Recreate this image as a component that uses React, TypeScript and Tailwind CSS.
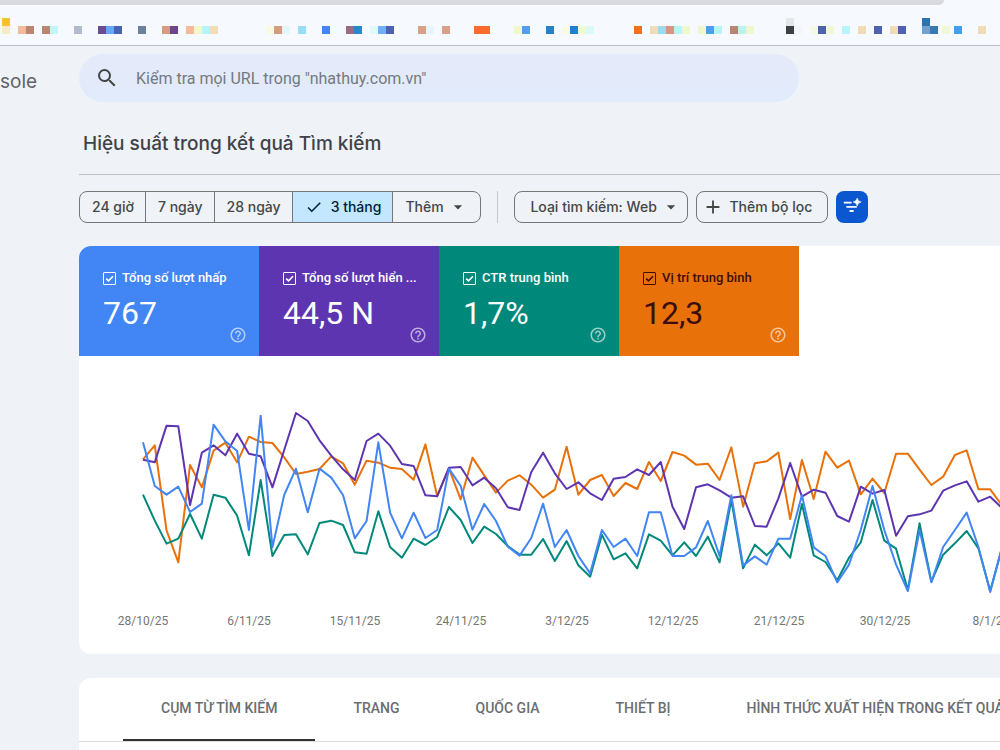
import { useState } from 'react';
import { MdAdd, MdArrowDropDown, MdCheck, MdHelpOutline, MdSearch } from 'react-icons/md';

// [x, y, colour] of every 8px block on the bookmarks bar
const bookmarks: [number, number, string][] = [
  [2, 0, '#fbc12d'], [2, 8, '#f5ecc6'], [18, 8, '#f4bb98'], [26, 8, '#ba8672'], [42, 8, '#ba8672'],
  [50, 8, '#c0f7fa'], [74, 8, '#afbccb'], [98, 8, '#6c4a96'], [106, 8, '#64a8fa'], [114, 8, '#4a62b4'],
  [138, 8, '#6c819c'], [162, 8, '#d59c80'], [170, 8, '#6c4590'], [186, 8, '#f4bb98'], [194, 8, '#f3f7d0'],
  [202, 8, '#b4f4fb'], [210, 8, '#f3dcb6'], [266, 8, '#fafae4'], [274, 8, '#d59c80'], [282, 8, '#e4f6fb'],
  [298, 8, '#98dcf7'], [322, 8, '#4285f4'], [346, 8, '#9c6a84'], [354, 8, '#2788d0'], [370, 8, '#e0f9fb'],
  [378, 8, '#6eb0fb'], [386, 8, '#4f62b0'], [418, 8, '#d8a086'], [426, 8, '#e4f6fb'], [442, 8, '#d8a086'],
  [474, 8, '#fa6c2e'], [482, 8, '#fa6c2e'], [514, 8, '#f1f9cc'], [522, 8, '#509fea'], [546, 8, '#2482cc'],
  [562, 8, '#fafae4'], [570, 8, '#1c82d0'], [578, 8, '#f1f9d4'], [586, 8, '#dcf9f7'], [634, 8, '#f27121'],
  [650, 8, '#f0dcb8'], [658, 8, '#98dcf2'], [666, 8, '#d8967e'], [674, 8, '#b8f4f7'], [682, 8, '#f1f7cc'],
  [698, 8, '#f1f7cc'], [706, 8, '#4aa0ea'], [714, 8, '#b8f4f7'], [730, 8, '#ba8672'], [738, 8, '#b8f4ee'],
  [746, 8, '#f1f7cc'], [786, 0, '#e4e6e9'], [786, 8, '#3c4043'], [794, 8, '#f4f5f8'], [810, 8, '#f4f8e4'],
  [818, 8, '#4f62b0'], [826, 8, '#f1f7d0'], [842, 8, '#b8f4fb'], [858, 8, '#f1dcb4'], [874, 8, '#4f62b0'],
  [890, 8, '#f1dcb4'], [898, 8, '#4f62b0'], [922, 0, '#2a72b4'], [922, 8, '#6ea2d4'], [930, 8, '#3a78b0'],
  [942, 8, '#f1f7d8'], [954, 8, '#42a0f0'], [978, 8, '#f1dcb4'],
];

const metrics = [
  { label: 'Tổng số lượt nhấp', value: '767', tile: 'bg-[#4285f4] text-white', mark: '#ffffff' },
  { label: 'Tổng số lượt hiển ...', value: '44,5 N', tile: 'bg-[#5e35b1] text-white', mark: '#ffffff' },
  { label: 'CTR trung bình', value: '1,7%', tile: 'bg-[#00897b] text-white', mark: '#ffffff' },
  { label: 'Vị trí trung bình', value: '12,3', tile: 'bg-[#e8710a] text-[#3c0d0d]', mark: '#3c0d0d' },
];

// Daily values, three chart units to a pixel, measured down from the top
const series = [
  {
    name: 'Vị trí trung bình',
    color: '#e8710a',
    points: [
      178, 136, 391, 487, 195, 262, 152, 128, 187, 110, 126, 129, 172, 222, 215, 207, 169, 190, 254, 182, 188, 203, 207,
      239, 133, 288, 205, 298, 173, 226, 278, 242, 226, 254, 293, 269, 140, 284, 240, 225, 288, 249, 267, 186, 243, 156,
      167, 194, 191, 240, 142, 320, 190, 184, 158, 357, 180, 297, 155, 203, 182, 283, 236, 279, 161, 161, 209, 255, 230,
      165, 151, 268, 268, 316,
    ],
  },
  {
    name: 'CTR trung bình',
    color: '#00897b',
    points: [
      284, 362, 431, 416, 342, 416, 284, 293, 347, 466, 240, 468, 405, 403, 463, 369, 362, 375, 457, 461, 334, 441, 473,
      416, 435, 411, 321, 360, 429, 380, 402, 438, 464, 464, 417, 483, 423, 496, 530, 404, 478, 460, 505, 403, 422, 466,
      427, 468, 410, 487, 300, 505, 434, 466, 430, 473, 312, 466, 486, 541, 473, 427, 300, 422, 446, 570, 370, 545, 464,
      430, 393, 445, 573, 445,
    ],
  },
  {
    name: 'Tổng số lượt hiển thị',
    color: '#5e35b1',
    points: [
      179, 187, 77, 79, 315, 158, 136, 166, 101, 161, 169, 262, 150, 39, 63, 121, 167, 208, 240, 123, 101, 137, 192, 198,
      286, 289, 203, 201, 256, 233, 265, 322, 330, 216, 158, 220, 267, 247, 280, 300, 236, 231, 208, 225, 186, 320, 387,
      262, 253, 271, 293, 289, 378, 380, 295, 189, 290, 269, 278, 348, 365, 260, 281, 270, 407, 349, 343, 332, 272, 256,
      244, 305, 290, 324,
    ],
  },
  {
    name: 'Tổng số lượt nhấp',
    color: '#4285f4',
    points: [
      127, 258, 284, 260, 336, 311, 74, 124, 153, 390, 47, 442, 285, 206, 337, 206, 233, 285, 415, 363, 127, 338, 415,
      338, 414, 390, 206, 258, 389, 312, 363, 440, 467, 414, 311, 441, 390, 468, 520, 390, 441, 416, 468, 337, 337, 468,
      468, 442, 363, 468, 286, 496, 469, 494, 416, 416, 286, 442, 468, 547, 494, 390, 258, 390, 494, 573, 390, 547, 441,
      390, 338, 441, 576, 441,
    ],
  },
];

const STEP = 35.3;

const dates = ['28/10/25', '6/11/25', '15/11/25', '24/11/25', '3/12/25', '12/12/25', '21/12/25', '30/12/25', '8/1/26'];
const ranges = ['24 giờ', '7 ngày', '28 ngày', '3 tháng'];
const tabs = ['CỤM TỪ TÌM KIẾM', 'TRANG', 'QUỐC GIA', 'THIẾT BỊ', 'HÌNH THỨC XUẤT HIỆN TRONG KẾT QUẢ TÌM KIẾM'];

function BrowserBar() {
  return (
    <div className="overflow-hidden border-b border-[#b9bfca] bg-[#f6f9fe]">
      <div className="mr-14 h-[5px] rounded-br-lg bg-[#d9dadf]" />
      <svg width="1000" height="40" viewBox="0 -13 1000 40" className="block" aria-hidden="true" shapeRendering="crispEdges">
        {bookmarks.map(([x, y, color]) => (
          <rect key={`${x}-${y}`} x={x} y={y} width="8" height="8" fill={color} />
        ))}
      </svg>
    </div>
  );
}

function MetricTile({ label, value, tile, mark }: (typeof metrics)[number]) {
  return (
    <div className={`flex h-[110px] w-[180px] shrink-0 flex-col pt-6 pr-3 pb-3 pl-6 ${tile}`}>
      <label className="flex items-center gap-[6px] text-[13px] leading-4 font-medium">
        <span className="relative size-[13px] shrink-0">
          <input type="checkbox" defaultChecked className="peer block size-[13px] appearance-none rounded-[1px] border border-current" />
          <svg viewBox="0 0 13 13" className="pointer-events-none absolute inset-0 hidden peer-checked:block" fill="none">
            <path d="M3.2 6.6 5.5 8.9 10 4.2" stroke={mark} strokeWidth="1.6" />
          </svg>
        </span>
        <span className="whitespace-nowrap">{label}</span>
      </label>
      <div className="flex flex-1 justify-between pt-[7px]">
        <div className="text-[32px] leading-10">{value}</div>
        <button aria-label={`Trợ giúp: ${label}`} className="self-end text-white/60">
          <MdHelpOutline size={18} />
        </button>
      </div>
    </div>
  );
}

function PerformanceChart() {
  return (
    <div className="overflow-hidden pt-11 pb-6">
      <svg
        width="860"
        height="200"
        viewBox="0 0 2580 600"
        className="ml-16 block overflow-visible"
        role="img"
        aria-label="Biểu đồ hiệu suất"
      >
        {series.map((s) => (
          <polyline
            key={s.name}
            points={s.points.map((y, i) => `${i * STEP},${y}`).join(' ')}
            fill="none"
            stroke={s.color}
            strokeWidth="6"
            strokeLinejoin="round"
          />
        ))}
      </svg>
      <div className="mt-3 ml-[11px] flex text-xs leading-[18px] text-[#757575]">
        {dates.map((date) => (
          <span key={date} className="w-[106px] shrink-0 text-center">
            {date}
          </span>
        ))}
      </div>
    </div>
  );
}

export default function App() {
  const [range, setRange] = useState('3 tháng');
  const [tab, setTab] = useState(tabs[0]);

  return (
    <div className="min-h-screen overflow-hidden bg-[#eff2f7] font-['Roboto',sans-serif]">
      <BrowserBar />

      {/* Header */}
      <header className="flex items-center pt-2">
        <div className="w-[79px] shrink-0 pt-2 font-['Inter',sans-serif] text-[19px] leading-8 text-[#5f6368]">sole</div>
        <label className="flex h-12 w-full max-w-[720px] items-center gap-[17px] rounded-full bg-linear-to-b from-[#e5eafa] to-[#e1ebfb] px-4 text-[#444746]">
          <MdSearch size={24} className="shrink-0" />
          <input
            type="search"
            aria-label="Kiểm tra URL"
            placeholder={'Kiểm tra mọi URL trong "nhathuy.com.vn"'}
            className="w-full bg-transparent pt-px text-base outline-none placeholder:text-[#747980]"
          />
        </label>
      </header>

      <main className="ml-[79px]">
        <h1 className="border-b border-[#bcc1cb] pt-[26px] pb-[14px] pl-1 font-['Inter',sans-serif] text-[19px] leading-8 font-medium text-[#3f4247]">
          Hiệu suất trong kết quả Tìm kiếm
        </h1>

        {/* Filters */}
        <div className="flex items-center gap-2 pt-4 pb-[23px] font-['Inter',sans-serif] text-sm font-medium text-[#444746]">
          <div className="flex h-8 shrink-0 overflow-hidden rounded-lg border border-[#747775]">
            {ranges.map((r) => (
              <button
                key={r}
                onClick={() => setRange(r)}
                className={`flex items-center gap-2 border-r border-[#747775] pr-[11px] pl-3 whitespace-nowrap ${
                  range === r ? 'bg-[#c2e7ff] text-[#001d35]' : ''
                }`}
              >
                {range === r && <MdCheck size={18} />}
                {r}
              </button>
            ))}
            <label className="relative flex items-center">
              <select aria-label="Khoảng thời gian khác" className="h-full appearance-none pr-9 pl-3 outline-none">
                <option>Thêm</option>
              </select>
              <MdArrowDropDown size={20} className="pointer-events-none absolute right-3" />
            </label>
          </div>
          <div className="mx-2 h-8 w-px shrink-0 bg-[#c4c7cf]" />
          <label className="relative flex h-8 shrink-0 items-center rounded-lg border border-[#747775]">
            <select aria-label="Loại tìm kiếm" className="h-full appearance-none pr-[30px] pl-[15px] outline-none">
              <option>Loại tìm kiếm: Web</option>
            </select>
            <MdArrowDropDown size={20} className="pointer-events-none absolute right-[6px]" />
          </label>
          <button className="flex h-8 shrink-0 items-center gap-[5px] rounded-lg border border-[#747775] pr-[15px] pl-[5px]">
            <MdAdd size={22} />
            Thêm bộ lọc
          </button>
          <button aria-label="Bộ lọc thông minh" className="flex size-8 shrink-0 items-center justify-center rounded-lg bg-[#0b57d0]">
            <svg width="20" height="20" viewBox="0 0 20 20" fill="none">
              <path d="M1.8 5.6H9.6M4.4 9.8H14.8M7.6 14H11.6" stroke="#fff" strokeWidth="1.8" />
              <path d="M15.2 1Q15.8 4.4 19.2 5Q15.8 5.6 15.2 9Q14.6 5.6 11.2 5Q14.6 4.4 15.2 1Z" fill="#fff" stroke="#fff" strokeWidth="0.6" />
            </svg>
          </button>
        </div>

        <section className="overflow-hidden rounded-l-xl bg-white">
          <div className="flex">
            {metrics.map((m) => (
              <MetricTile key={m.label} {...m} />
            ))}
          </div>
          <PerformanceChart />
        </section>

        {/* Dimension tabs */}
        <section className="mt-6 overflow-hidden rounded-tl-xl bg-white pb-10">
          <div role="tablist" className="flex h-16 border-b border-[#dadce0] pl-11 text-sm font-medium text-[#6b6e70]">
            {tabs.map((t) => (
              <button
                key={t}
                role="tab"
                aria-selected={tab === t}
                onClick={() => setTab(t)}
                className={`shrink-0 border-b-2 px-[38px] pb-[2px] whitespace-nowrap ${tab === t ? 'border-[#333333]' : 'border-transparent'}`}
              >
                {t}
              </button>
            ))}
          </div>
        </section>
      </main>
    </div>
  );
}
